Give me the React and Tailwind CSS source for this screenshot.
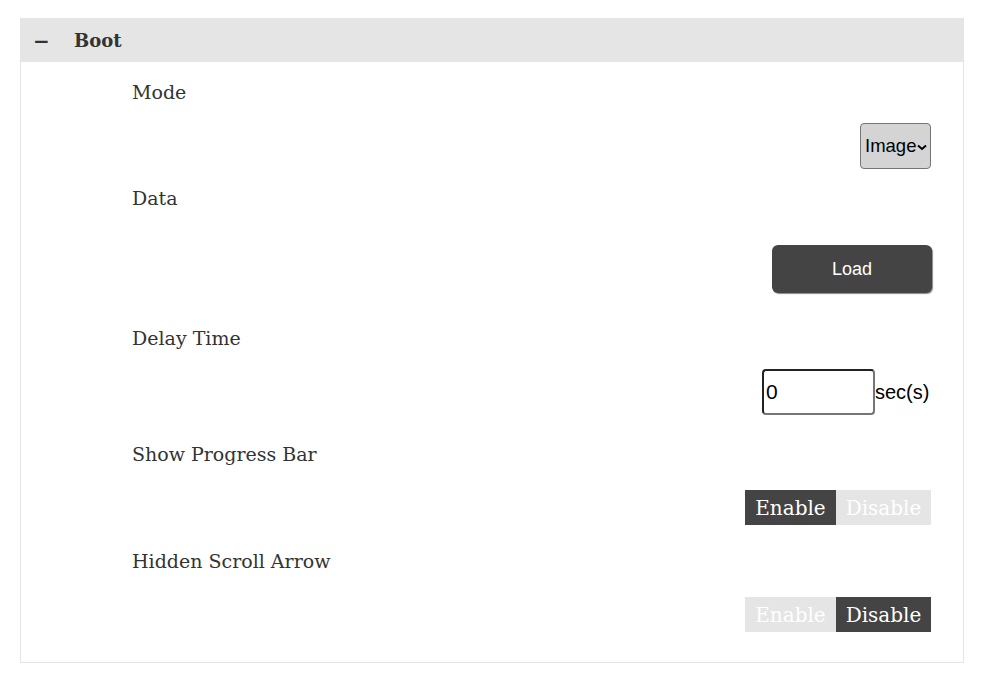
import React from "react";

const serif = "font-['DejaVu_Serif',serif]";
const sans = "font-['Liberation_Sans',Arial,sans-serif]";

const Label = ({ children, className = "" }) => (
  <div className={`pl-[111px] text-[19px] leading-[27px] text-[#333] ${className}`}>{children}</div>
);

const Toggle = ({ on }) => (
  <div className={`flex h-[35px] text-[20px] text-white ${serif}`}>
    <span className={`flex w-[91px] items-center justify-center ${on ? "bg-[#444]" : "bg-[#e5e5e5]"}`}>
      Enable
    </span>
    <span className={`flex w-[95px] items-center justify-center ${on ? "bg-[#e5e5e5]" : "bg-[#444]"}`}>
      Disable
    </span>
  </div>
);

export default function App() {
  return (
    <div className={`min-h-screen bg-white pl-[20px] pr-[21px] pt-[18px] ${serif}`}>
      <div className="border border-[#e5e5e5]">
        <div className="flex h-[43px] items-center bg-[#e5e5e5] text-[18px] font-bold text-[#333]">
          <span className="ml-[12px] w-[41px] text-[20px]">−</span>
          <span>Boot</span>
        </div>

        <div className="pb-[30px] pr-[32px]">
          {/* Mode */}
          <Label className="mt-[17px]">Mode</Label>
          <div className="mt-[17px] flex justify-end">
            <div
              className={`flex h-[46px] w-[71px] items-center rounded-[4px] border border-[#767676] bg-[#d4d4d4] pl-[4px] text-[18.5px] text-black ${sans}`}
            >
              <span>Image</span>
              <svg width="10" height="7" viewBox="0 0 10 7" className="ml-[1px] mt-[2px]">
                <path d="M1 1.5 L5 5 L9 1.5" fill="none" stroke="#000" strokeWidth="2" />
              </svg>
            </div>
          </div>

          {/* Data */}
          <Label className="mt-[16px]">Data</Label>
          <div className="mt-[33px] flex justify-end">
            <button
              className={`mr-[-1px] h-[48px] w-[160px] rounded-[6px] bg-[#444] text-[18px] text-white shadow-[1px_1px_1px_#888] ${sans}`}
            >
              Load
            </button>
          </div>

          {/* Delay Time */}
          <Label className="mt-[32px]">Delay Time</Label>
          <div className="mt-[17px] flex items-center justify-end">
            <div
              className={`flex h-[46px] w-[113px] items-center rounded-[4px] border-2 border-[#222] border-r-[#767676] border-b-[#767676] pl-[2px] text-[21px] text-black ${sans}`}
            >
              0
            </div>
            <span className={`w-[56px] text-[20px] text-black ${sans}`}>sec(s)</span>
          </div>

          {/* Show Progress Bar */}
          <Label className="mt-[26px]">Show Progress Bar</Label>
          <div className="mt-[22px] flex justify-end">
            <Toggle on />
          </div>

          {/* Hidden Scroll Arrow */}
          <Label className="mt-[23px]">Hidden Scroll Arrow</Label>
          <div className="mt-[22px] flex justify-end">
            <Toggle on={false} />
          </div>
        </div>
      </div>
    </div>
  );
}
